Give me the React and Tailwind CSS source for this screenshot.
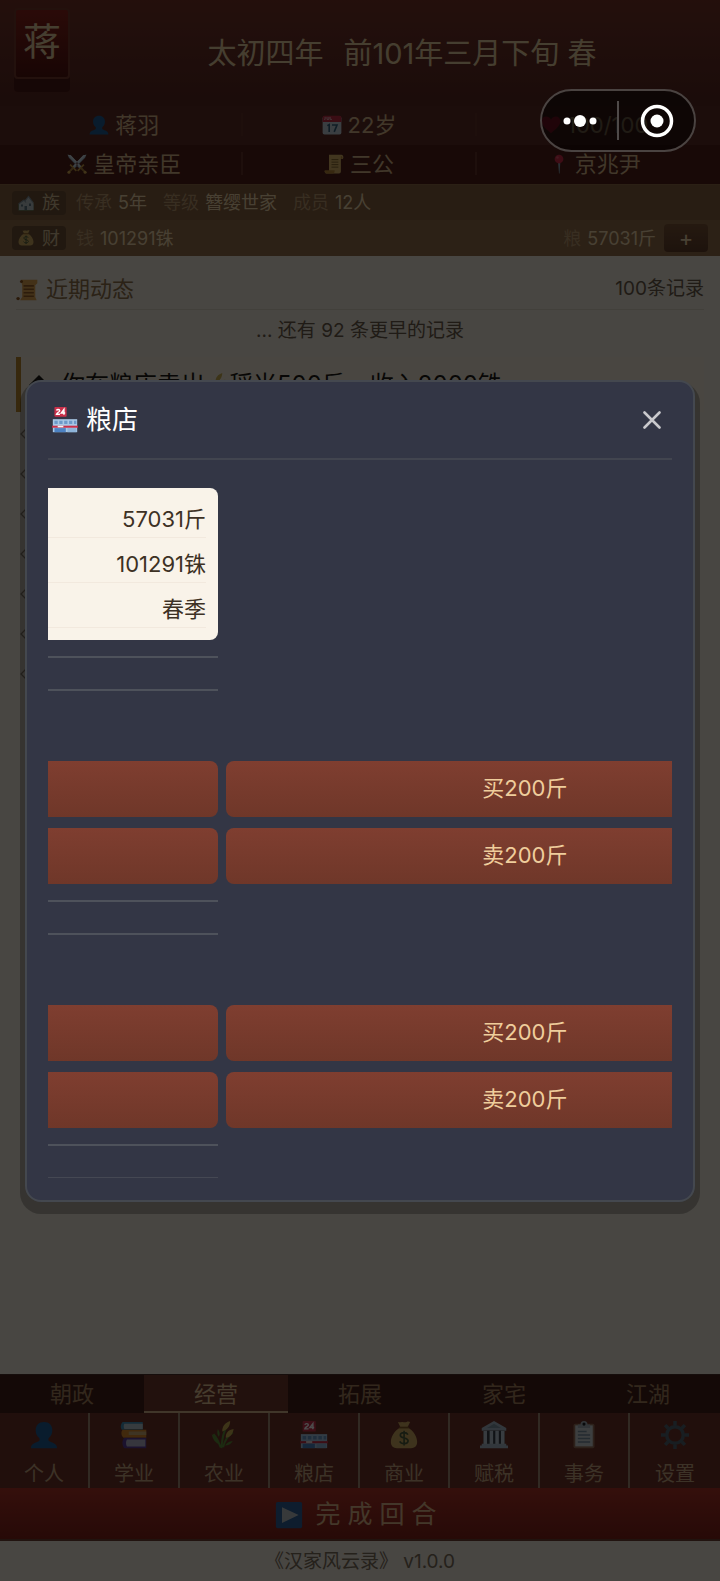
import React from "react";

function Svg({ className, children }) {
  return (
    <svg viewBox="0 0 32 32" className={"shrink-0 " + className} aria-hidden="true">
      {children}
    </svg>
  );
}

function Person({ className }) {
  return (
    <Svg className={className}>
      <path fill="#1f5f96" d="M16 1c-6 0-9.500 4-9.500 9.500 0 4 1.500 7 4 8.800.8 1.200.6 3-.6 3.900C7 24.800 1 25.500 1 31h30c0-5.500-6-6.200-8.900-7.800-1.200-.9-1.400-2.700-.6-3.900 2.500-1.800 4-4.800 4-8.800C25.500 5 22 1 16 1z" />
    </Svg>
  );
}

function Calendar({ className }) {
  return (
    <Svg className={className}>
      <rect x="1" y="2" width="30" height="29" rx="3" fill="#c3d0da" />
      <path fill="#c22c45" d="M4 1h24a3 3 0 0 1 3 3v7H1V4a3 3 0 0 1 3-3z" />
      <path d="M5 3v4H3.500M8 3v4h3V3M13 3v4h3" stroke="#e8c8cc" strokeWidth="1.300" fill="none" />
      <path d="M8.500 17l3-1.500V27M16 16h8l-4.500 11" stroke="#35607c" strokeWidth="2.600" fill="none" />
    </Svg>
  );
}

function Heart({ className }) {
  return (
    <Svg className={className}>
      <path fill="#d6203c" d="M16 29C6 21 1 16 1 10c0-4.500 3.200-7.500 7.200-7.500 3.300 0 6.200 1.800 7.800 5 1.600-3.200 4.500-5 7.800-5 4 0 7.200 3 7.200 7.500 0 6-5 11-15 19z" />
    </Svg>
  );
}

function Swords({ className }) {
  return (
    <Svg className={className}>
      <path fill="#a9bfd0" d="M1 1l5 1 17 18-3 3L3 6zM31 1l-5 1L9 20l3 3L29 6z" />
      <path fill="#d3dfe8" d="M1 1l20 20 2-1L6 2zM31 1L11 21l-2-1L26 2z" />
      <path d="M5 17l10 10M27 17L17 27" stroke="#c99a45" strokeWidth="2.800" />
      <path d="M10 22l-7 7M22 22l7 7" stroke="#a97f3a" strokeWidth="3.200" />
      <circle cx="3" cy="29" r="2.400" fill="#d9ad55" />
      <circle cx="29" cy="29" r="2.400" fill="#d9ad55" />
    </Svg>
  );
}

function Scroll({ className }) {
  return (
    <Svg className={className}>
      <path fill="#dcb668" d="M8 1h20a4 4 0 0 1 3 4c0 2-1 3-3 3h-1v20a3 3 0 0 1-3 3H4c-2 0-3-2-3-4h7z" />
      <path fill="#b78637" d="M27 3a2.500 2.500 0 1 1 0 5zM1 26h16v2a3 3 0 0 1-3 3H4c-2 0-3-2-3-5z" />
      <path d="M12 9h11M12 13h11M12 17h11M12 21h11" stroke="#80602a" strokeWidth="1.500" />
    </Svg>
  );
}

function NewsScroll({ className }) {
  return (
    <Svg className={className}>
      <path fill="#dfa552" d="M7 1h24v5l-3 3v17l2 5H6l3-5V9z" />
      <path d="M11 10h15M11 15h15M11 20h15M11 25h15" stroke="#96602a" strokeWidth="2.200" />
      <circle cx="8" cy="3.500" r="2.200" fill="#8d5520" />
      <circle cx="3" cy="28.500" r="2.500" fill="#8d5520" />
    </Svg>
  );
}

function Pin({ className }) {
  return (
    <Svg className={className}>
      <path fill="#8aa3b3" d="M14.500 14h3.500l-1 17h-1z" />
      <circle cx="16" cy="8" r="7" fill="#cf2c47" />
      <circle cx="13.500" cy="5.500" r="2" fill="#e0566c" />
    </Svg>
  );
}

function House({ className }) {
  return (
    <Svg className={className}>
      <path fill="#6f9c78" d="M1 18h30v13H1z" />
      <path fill="#bcc7c8" d="M2 17l9-7 3 1 7-8 10 12v15H2z" />
      <path d="M1 18l11-8 4 5M13 13l8-10 9 12" stroke="#7f8d98" strokeWidth="2.200" fill="none" />
      <path fill="#5f7782" d="M6 19h4v4H6zM13 22h5v8h-5zM22 17h4v5h-4z" />
    </Svg>
  );
}

function MoneyBag({ className }) {
  return (
    <Svg className={className}>
      <path fill="#d0ac62" d="M9 1c2 1 3 0 5 0s3 1 5 0 3 0 4 0l-3 6c7 4 11 11 11 17 0 5-3 7-7 7H8c-4 0-7-2-7-7C1 18 5 11 12 7z" />
      <path d="M10.500 7.500h11" stroke="#875c27" strokeWidth="2" />
      <path d="M20.500 15.500c-1-1.800-2.600-2.300-4.500-2.300-2.400 0-4.200 1.100-4.200 3.100 0 4.300 8.900 2 8.900 6.400 0 2-2 3.200-4.600 3.200-2.300 0-4-.8-5-2.600M16.100 11v17" stroke="#4b5d3c" strokeWidth="1.900" fill="none" />
    </Svg>
  );
}

function Store({ className }) {
  return (
    <Svg className={className}>
      <rect x="3" y="0" width="15" height="12" rx="1" fill="#c9304a" />
      <path d="M5.500 4.200c.6-1.600 4-1.700 4 .3C9.500 6 6 7 5.500 9h4.300M14.700 9.500V3l-3.300 4.400h4.800" stroke="#fff" strokeWidth="1.700" fill="none" />
      <path fill="#a9c8e6" d="M1 15h30v16H1z" />
      <path d="M3 17h4v4H3zM9 17h4v4H9zM15 17h4v4h-4zM21 17h4v4h-4zM27 17h3v4h-3z" fill="#6d9aca" />
      <path fill="#c9304a" d="M0 23h32v2.500H0z" />
      <path fill="#f6f2f2" d="M7 23h7v2H7z" />
      <path fill="#4c82c3" d="M3 26h14v5H3z" />
      <path fill="#8db4da" d="M19 26h11v5H19z" />
    </Svg>
  );
}

function Books({ className }) {
  return (
    <Svg className={className}>
      <path fill="#4590b8" d="M3 1h23v9H2C0 7 1 3 3 1z" />
      <path fill="#b9cad3" d="M5 3h21v6H5c-1-2-1-4 0-6z" />
      <path fill="#d98a2c" d="M3 10h27v9H4c-3-2-3-7-1-9z" />
      <path fill="#cfae76" d="M10 12h20v4H10z" />
      <path fill="#5c3e9c" d="M5 19h25v12H5c-3-3-3-9 0-12z" />
      <path fill="#b5b5cc" d="M8 21h21v8H8c-1.500-2-1.500-6 0-8z" />
    </Svg>
  );
}

function Wheat({ className }) {
  return (
    <Svg className={className}>
      <path d="M13 31C14 20 15 12 20 5M15 30c2-9 5-13 11-17M12 30C10 24 8 19 4 15" stroke="#5f8f3a" strokeWidth="2.200" fill="none" />
      <path fill="#5f8f3a" d="M11 27C6 25 3 21 2 15c5 2 8 6 9 12zM10 18c-2-3-2-6-1-9 2 3 3 6 1 9zM17 28c3-4 5-5 9-5-2 3-5 5-9 5z" />
      <path fill="#cbb052" d="M14 12c0-6 3-10 9-12 0 6-3 10-9 12zM18 19c0-6 3-9 9-10-1 6-4 10-9 10z" />
    </Svg>
  );
}

function Bank({ className }) {
  return (
    <Svg className={className}>
      <path fill="#a9bac8" d="M16 0l14 8v3H2V8z" />
      <path fill="#8196a6" d="M16 3l8 5H8z" />
      <path fill="#39424b" d="M4 11h24v16H4z" />
      <path fill="#bccad5" d="M4 11h4v16H4zM11 11h4v16h-4zM17.500 11h4v16h-4zM24 11h4v16h-4z" />
      <path fill="#a9bac8" d="M2 26h28v2h2v3H0v-3h2z" />
    </Svg>
  );
}

function Clipboard({ className }) {
  return (
    <Svg className={className}>
      <rect x="4" y="3" width="24" height="28" rx="2" fill="#96705a" />
      <path fill="#cbd2d6" d="M6 5h20v24H6z" />
      <path fill="#a4b0b9" d="M9 4h3a4 4 0 0 1 8 0h3v4H9z" />
      <circle cx="16" cy="3.500" r="1.800" fill="#20242a" />
      <path d="M9 12h10M9 16h14M9 20h14M9 24h14" stroke="#7b8fa0" strokeWidth="1.600" />
    </Svg>
  );
}

function Gear({ className }) {
  return (
    <Svg className={className}>
      <circle cx="16" cy="16" r="9.500" fill="none" stroke="#506673" strokeWidth="4" />
      <path d="M16 0v5M16 27v5M0 16h5M27 16h5M4.700 4.700l3.500 3.500M23.800 23.800l3.500 3.500M27.300 4.700l-3.500 3.500M8.200 23.800l-3.500 3.500" stroke="#506673" strokeWidth="4" />
    </Svg>
  );
}

function Play({ className }) {
  return (
    <Svg className={className}>
      <rect x="1" y="1" width="30" height="30" rx="2" fill="#2f6199" />
      <path fill="#b9c0c4" d="M8 7l19 9-19 9z" />
    </Svg>
  );
}

const stats = [
  [
    { icon: Person, text: "蒋羽" },
    { icon: Calendar, text: "22岁" },
    { icon: Heart, text: "100/100" },
  ],
  [
    { icon: Swords, text: "皇帝亲臣" },
    { icon: Scroll, text: "三公" },
    { icon: Pin, text: "京兆尹" },
  ],
];

const tabs = ["朝政", "经营", "拓展", "家宅", "江湖"];

const navItems = [
  { icon: Person, text: "个人" },
  { icon: Books, text: "学业" },
  { icon: Wheat, text: "农业" },
  { icon: Store, text: "粮店" },
  { icon: MoneyBag, text: "商业" },
  { icon: Bank, text: "赋税" },
  { icon: Clipboard, text: "事务" },
  { icon: Gear, text: "设置" },
];

function StatRow({ items, className }) {
  return (
    <div className={"grid h-[39px] grid-cols-3 px-2 pt-[7px] pb-[9px] text-[22px] leading-[22px] text-[#d9b98c] " + className}>
      {items.map(({ icon: Icon, text }, i) => (
        <div
          key={text}
          className={
            "flex items-center justify-center gap-1.5 " + (i < 2 ? "border-r-2 border-[#65322a]" : "")
          }
        >
          <Icon className="size-5" />
          <span>{text}</span>
        </div>
      ))}
    </div>
  );
}

function BarTag({ icon: Icon, text }) {
  return (
    <span className="flex h-6 w-[54px] items-center justify-center gap-2 rounded bg-[#6f5236] text-[#d8c096]">
      <Icon className="size-4" />
      {text}
    </span>
  );
}

function Pair({ label, value }) {
  return (
    <span className="flex gap-1.5">
      <span className="text-[#bb9970]">{label}</span>
      <span className="text-[#f0d8ac]">{value}</span>
    </span>
  );
}

function Header() {
  return (
    <header>
      <div className="flex h-[106px] items-start bg-linear-to-b from-[#78352b] to-[#5a2922] pt-2 pl-3.5">
        <div className="flex h-[71px] w-14 items-center justify-center rounded-sm border-2 border-[#763a2c] bg-linear-to-b from-[#8f241c] to-[#521410] pb-1 text-[38px] text-[#e8cfa0] shadow-[0_13px_0_0_#4c1a14]">
          蒋
        </div>
        <h1 className="ml-3.5 flex h-[92px] flex-1 items-center justify-center gap-5 text-[29px] text-[#e8d0a0]">
          <span>太初四年</span>
          <span>前101年三月下旬 春</span>
        </h1>
      </div>
      <StatRow items={stats[0]} className="bg-[#602e26]" />
      <StatRow items={stats[1]} className="bg-[#50211a]" />
      <div className="flex h-9 items-center gap-4 border-t border-[#8f6b48] bg-[#856140] px-3 text-[18px]">
        <div className="flex items-center gap-2.5">
          <BarTag icon={House} text="族" />
          <Pair label="传承" value="5年" />
        </div>
        <Pair label="等级" value="簪缨世家" />
        <Pair label="成员" value="12人" />
      </div>
      <div className="flex h-9 items-center bg-[#936f4a] px-3 text-[18px]">
        <div className="flex flex-1 items-center gap-2.5">
          <BarTag icon={MoneyBag} text="财" />
          <Pair label="钱" value="101291铢" />
        </div>
        <Pair label="粮" value="57031斤" />
        <button
          type="button"
          aria-label="增加粮食"
          className="ml-2 flex h-7 w-11 items-center justify-center rounded bg-linear-to-b from-[#7d5638] to-[#63402b] text-[22px] leading-none text-[#f0d8ac]"
        >
          +
        </button>
      </div>
    </header>
  );
}

function News() {
  return (
    <main className="flex-1 px-4 pt-3">
      <div className="flex h-[42px] items-center justify-between border-b border-[#dcd5c6] pt-0.5">
        <h2 className="flex items-center gap-2 text-[22px] text-[#8f734c]">
          <NewsScroll className="size-[22px]" />
          近期动态
        </h2>
        <span className="text-[19px] text-[#6b5c4a]">100条记录</span>
      </div>
      <p className="flex h-[47px] items-center justify-center pb-1 text-[19px] text-[#6b5c4a]">
        ... 还有 92 条更早的记录
      </p>
      <ul className="text-[24px] text-[#1c1814]">
        <li className="mb-0.5 flex h-[55px] items-center border-l-5 border-[#b8862c] bg-[#f3ecd9] pl-2">
          <svg viewBox="0 0 20 20" className="mr-3 size-5" aria-hidden="true">
            <path d="M10 0l10 10-10 10L0 10z" fill="currentColor" />
          </svg>
          你在粮店卖出
          <Wheat className="size-6" />
          稻米500斤，收入2000铢
        </li>
        {[0, 1, 2, 3, 4, 5, 6].map((n) => (
          <li key={n} className="flex h-10 items-center pl-1">
            <svg viewBox="0 0 14 14" className="size-3.5" aria-hidden="true">
              <path d="M7 1l6 6-6 6-6-6z" fill="none" stroke="#948b7c" strokeWidth="1.300" />
            </svg>
          </li>
        ))}
      </ul>
    </main>
  );
}

function Footer() {
  return (
    <footer>
      <div className="grid grid-cols-5 border-t border-[#4a3028] bg-[#442018]">
        {tabs.map((tab) => (
          <button
            key={tab}
            type="button"
            className={
              "h-[38px] border-b-2 pt-0.5 text-[22px] leading-none " +
              (tab === "经营"
                ? "border-[#d6b48c] bg-[#743a2e] text-[#e8c797]"
                : "border-transparent text-[#a88460]")
            }
          >
            {tab}
          </button>
        ))}
      </div>
      <nav className="grid grid-cols-8 bg-[#703429]">
        {navItems.map(({ icon: Icon, text }, i) => (
          <button
            key={text}
            type="button"
            className={
              "flex h-[75px] flex-col items-center gap-[11px] pt-2 text-[20px] leading-7 text-[#c9a882] " +
              (i < 7 ? "border-r-2 border-[#a68c76]" : "")
            }
          >
            <Icon className="size-7" />
            {text}
          </button>
        ))}
      </nav>
      <button
        type="button"
        className="flex h-[53px] w-full items-center justify-center gap-3 border-b-2 border-[#6e4034] bg-linear-to-b from-[#b03428] to-[#82221a] pt-0.5 pr-2 text-[25px] text-[#e0b98c]"
      >
        <Play className="size-7" />
        <span>完 成 回 合</span>
      </button>
      <p className="flex h-10 items-center justify-center pt-0.5 text-[19px] text-[#7d6f5d]">
        《汉家风云录》 v1.0.0
      </p>
    </footer>
  );
}

function ActionRow({ label }) {
  return (
    <div className="flex gap-2">
      <button
        type="button"
        aria-label={label.replace("200", "100")}
        className="h-14 w-[170px] shrink-0 rounded-r-lg bg-linear-to-b from-[#7f3e30] to-[#6f3729]"
      />
      <div className="flex-1 overflow-hidden">
        <button
          type="button"
          className="h-14 w-[134%] rounded-l-lg bg-linear-to-b from-[#7f3e30] to-[#6f3729] text-[22px] text-[#efcd9c]"
        >
          {label}
        </button>
      </div>
    </div>
  );
}

function GrainCard() {
  return (
    <section className="mt-[31px]">
      <div className="h-0.5 w-[170px] bg-[#4e525b]" />
      <div className="flex flex-col gap-[11px] pt-[70px] pb-4">
        <ActionRow label="买200斤" />
        <ActionRow label="卖200斤" />
      </div>
      <div className="h-0.5 w-[170px] bg-[#4e525b]" />
    </section>
  );
}

function StoreDialog() {
  return (
    <div
      role="dialog"
      aria-label="粮店"
      className="w-full rounded-2xl border-2 border-[#44484f] bg-[#333645] px-[21px] pb-[22px] shadow-[0_7px_0_5px_rgb(0_0_0/0.25)]"
    >
      <div className="flex h-[78px] items-center justify-between border-b-2 border-[#42454f] pr-1 pl-1">
        <h2 className="flex items-center gap-2 text-[26px] text-white">
          <Store className="size-[26px]" />
          粮店
        </h2>
        <button type="button" aria-label="关闭" className="flex size-8 items-center justify-center">
          <svg viewBox="0 0 18 18" className="size-[18px]" aria-hidden="true">
            <path d="M1.500 1.500l15 15M16.500 1.500l-15 15" stroke="#c9c9cc" strokeWidth="2.600" strokeLinecap="round" />
          </svg>
        </button>
      </div>
      <div className="mt-7 w-[170px] rounded-r-lg bg-[#f9f3e9] pt-[5px] pr-3 pb-3 text-right text-[22px] leading-9 text-[#3d3124]">
        {["57031斤", "101291铢", "春季"].map((v) => (
          <div key={v} className="h-[45px] border-b border-[#f2e9de] pt-2">
            {v}
          </div>
        ))}
      </div>
      <div className="mt-4 h-0.5 w-[170px] bg-[#4e525b]" />
      <GrainCard />
      <GrainCard />
      <div className="mt-[31px] h-px w-[170px] bg-[#454853]" />
    </div>
  );
}

function Capsule() {
  return (
    <div className="absolute top-[89px] right-6 flex h-[63px] w-[156px] items-center rounded-full border-2 border-[#4a4341] bg-black/50">
      <button type="button" aria-label="更多" className="flex h-full flex-1 items-center justify-center">
        <svg viewBox="0 0 34 14" className="h-3.5 w-[34px]" aria-hidden="true">
          <g fill="#fff">
            <circle cx="4" cy="7" r="3.500" />
            <circle cx="17" cy="7" r="6" />
            <circle cx="30" cy="7" r="3.500" />
          </g>
        </svg>
      </button>
      <span className="h-[39px] w-0.5 bg-[#4f4a49]" />
      <button type="button" aria-label="关闭小程序" className="flex h-full flex-1 items-center justify-center">
        <svg viewBox="0 0 34 34" className="size-[34px]" aria-hidden="true">
          <circle cx="17" cy="17" r="14.500" fill="none" stroke="#fff" strokeWidth="3.500" />
          <circle cx="17" cy="17" r="6.500" fill="#fff" />
        </svg>
      </button>
    </div>
  );
}

export default function App() {
  return (
    <div className="relative flex min-h-screen flex-col bg-[#f0e9dc] font-[Inter,'Noto_Sans_CJK_SC',sans-serif]">
      <Header />
      <News />
      <Footer />
      <div className="absolute inset-0 flex items-center justify-center bg-black/70 px-[25px]">
        <StoreDialog />
      </div>
      <Capsule />
    </div>
  );
}
